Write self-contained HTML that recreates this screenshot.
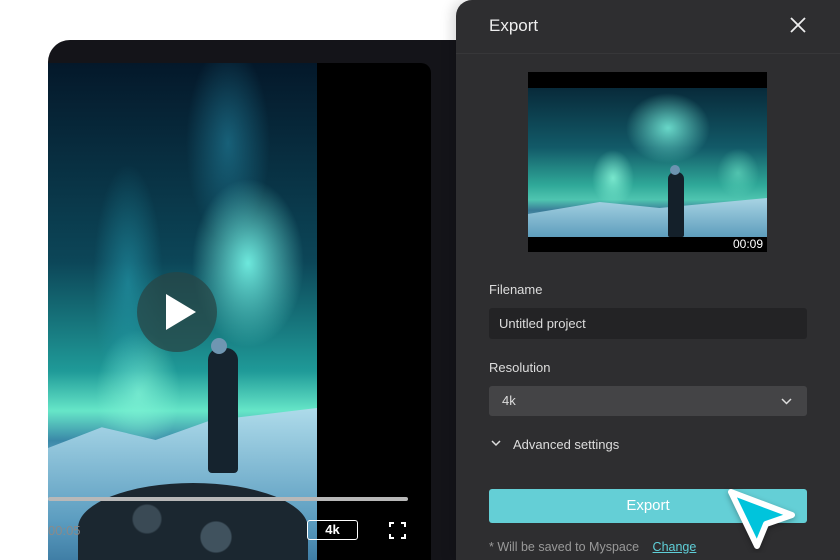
<!DOCTYPE html>
<html><head><meta charset="utf-8"><style>
*{margin:0;padding:0;box-sizing:border-box}
body{width:840px;height:560px;background:#fff;position:relative;overflow:hidden;font-family:"Liberation Sans",sans-serif}
.back{position:absolute;left:48px;top:40px;width:420px;height:520px;background:#141419;border-top-left-radius:22px}
.video{position:absolute;left:48px;top:63px;width:383px;height:497px;background:#000;border-top-right-radius:10px;overflow:hidden}
.img{position:absolute;left:0;top:0;width:269px;height:497px;overflow:hidden;
background:
radial-gradient(ellipse 80px 120px at 200px 200px,rgba(120,250,235,.9),transparent 70%),
radial-gradient(ellipse 50px 170px at 80px 220px,rgba(40,170,190,.5),transparent 70%),
radial-gradient(ellipse 60px 90px at 90px 330px,rgba(130,245,215,.75),transparent 70%),
radial-gradient(ellipse 60px 140px at 180px 80px,rgba(40,150,180,.5),transparent 70%),
linear-gradient(#04182a 0%,#0c4658 40%,#1f9a98 62%,#66e6c8 70%,#3a88a8 76%,#7dbbd8 82%,#a0d0e4 100%)}
.snow{position:absolute;left:0;top:345px;width:269px;height:160px;background:linear-gradient(#aedbea,#5c9dc0 70%,#3a78a0);clip-path:polygon(0 25%,20% 12%,40% 20%,60% 8%,100% 0,100% 100%,0 100%)}
.rock{position:absolute;left:30px;top:420px;width:230px;height:90px;background:radial-gradient(circle at 30% 40%,#3a4a55 0 8%,transparent 9%),radial-gradient(circle at 60% 60%,#40525e 0 10%,transparent 11%),#1b2730;border-radius:50% 50% 0 0/50% 50% 0 0}
.man{position:absolute;left:160px;top:285px;width:30px;height:125px;background:#15232e;border-radius:12px 12px 4px 4px}
.head{position:absolute;left:163px;top:275px;width:16px;height:16px;background:#6f96b2;border-radius:50%}
.play{position:absolute;left:89px;top:209px;width:80px;height:80px;border-radius:50%;background:rgba(40,70,70,.75)}
.play:after{content:"";position:absolute;left:29px;top:22px;border-left:30px solid #fff;border-top:18px solid transparent;border-bottom:18px solid transparent}
.bar{position:absolute;left:0;top:434px;width:360px;height:4px;background:#b8b8b8;border-radius:2px}
.t{position:absolute;left:0;top:460px;color:#8a8a8a;font-size:13px}
.k4{position:absolute;left:259px;top:457px;width:51px;height:20px;border:1.5px solid #fff;border-radius:3px;color:#fff;font-size:13px;font-weight:bold;text-align:center;line-height:17px}
.fs{position:absolute;left:341px;top:459px;width:17px;height:17px}
.panel{position:absolute;left:456px;top:0;width:384px;height:560px;background:#2e2e30;border-top-left-radius:16px;box-shadow:-4px 0 12px rgba(0,0,0,.15)}
.hd{height:54px;border-bottom:1px solid #373739;color:#eee;font-size:17px;padding:16px 0 0 33px}
.x{position:absolute;left:333px;top:16px}
.thumb{position:absolute;left:72px;top:72px;width:239px;height:180px;background:#000}
.timg{position:absolute;left:0;top:16px;width:239px;height:149px;overflow:hidden;background:
radial-gradient(ellipse 60px 50px at 140px 40px,rgba(120,240,220,.85),transparent 70%),
radial-gradient(ellipse 30px 40px at 85px 90px,rgba(140,250,220,.8),transparent 70%),
radial-gradient(ellipse 30px 35px at 210px 85px,rgba(110,230,200,.6),transparent 70%),
linear-gradient(#082a3a 0%,#125a68 40%,#2fa898 65%,#4fc5b0 75%,#3a7c98 82%,#8cbfd6 100%)}
.tsnow{position:absolute;left:0;top:110px;width:239px;height:40px;background:linear-gradient(#a8d4e4,#5c9cbc);clip-path:polygon(0 40%,30% 10%,55% 25%,100% 0,100% 100%,0 100%)}
.tman{position:absolute;left:140px;top:84px;width:16px;height:65px;background:#14202a;border-radius:7px 7px 2px 2px}
.thd{position:absolute;left:142px;top:77px;width:10px;height:10px;border-radius:50%;background:#6d93b0}
.dur{position:absolute;right:4px;bottom:1px;color:#fff;font-size:12px}
.lbl{position:absolute;left:33px;color:#ddd;font-size:13px}
.inp{position:absolute;left:33px;width:318px;border-radius:3px;color:#ddd;font-size:13px;padding-left:10px}
.btn{position:absolute;left:33px;top:489px;width:318px;height:34px;background:#64cfd6;border-radius:3px;color:#fff;font-size:15px;text-align:center;line-height:34px}
.ft{position:absolute;left:33px;top:540px;color:#999;font-size:12.5px}
.ft u{color:#5fcfd8;margin-left:10px}
</style></head><body>
<div class="back"></div>
<div class="video">
 <div class="img"><div class="snow"></div><div class="rock"></div><div class="man"></div><div class="head"></div><div class="play"></div></div>
 <div class="bar"></div>
 <div class="t">00:05</div>
 <div class="k4">4k</div>
 <svg class="fs" viewBox="0 0 17 17" fill="none" stroke="#fff" stroke-width="2"><path d="M1 5V1h4M12 1h4v4M16 12v4h-4M5 16H1v-4"/></svg>
</div>
<div class="panel">
 <div class="hd">Export</div>
 <svg class="x" width="18" height="18" viewBox="0 0 18 18" stroke="#eee" stroke-width="1.8"><path d="M2 2l14 14M16 2L2 16"/></svg>
 <div class="thumb"><div class="timg"><div class="tsnow"></div><div class="tman"></div><div class="thd"></div></div><div class="dur">00:09</div></div>
 <div class="lbl" style="top:282px">Filename</div>
 <div class="inp" style="top:308px;height:31px;background:#232325;line-height:31px">Untitled project</div>
 <div class="lbl" style="top:360px">Resolution</div>
 <div class="inp" style="top:386px;height:30px;background:#444446;line-height:30px;padding-left:13px">4k
  <svg style="position:absolute;right:15px;top:12px" width="11" height="7" viewBox="0 0 11 7" fill="none" stroke="#ddd" stroke-width="1.5"><path d="M1 1l4.5 4.5L10 1"/></svg></div>
 <svg style="position:absolute;left:35px;top:440px" width="10" height="7" viewBox="0 0 10 7" fill="none" stroke="#ddd" stroke-width="1.5"><path d="M1 1l4 4 4-4"/></svg>
 <div class="lbl" style="top:437px;left:57px">Advanced settings</div>
 <div class="btn">Export</div>
 <div class="ft">* Will be saved to Myspace <u>Change</u></div>
</div>
<svg style="position:absolute;left:722px;top:483px" width="80" height="70" viewBox="0 0 80 70"><path d="M9 9L70 32 44 41 35 63Z" fill="#00c4dc" stroke="#fff" stroke-width="6" stroke-linejoin="round" style="filter:drop-shadow(0 2px 3px rgba(0,0,0,.3))"/></svg>
</body></html>
